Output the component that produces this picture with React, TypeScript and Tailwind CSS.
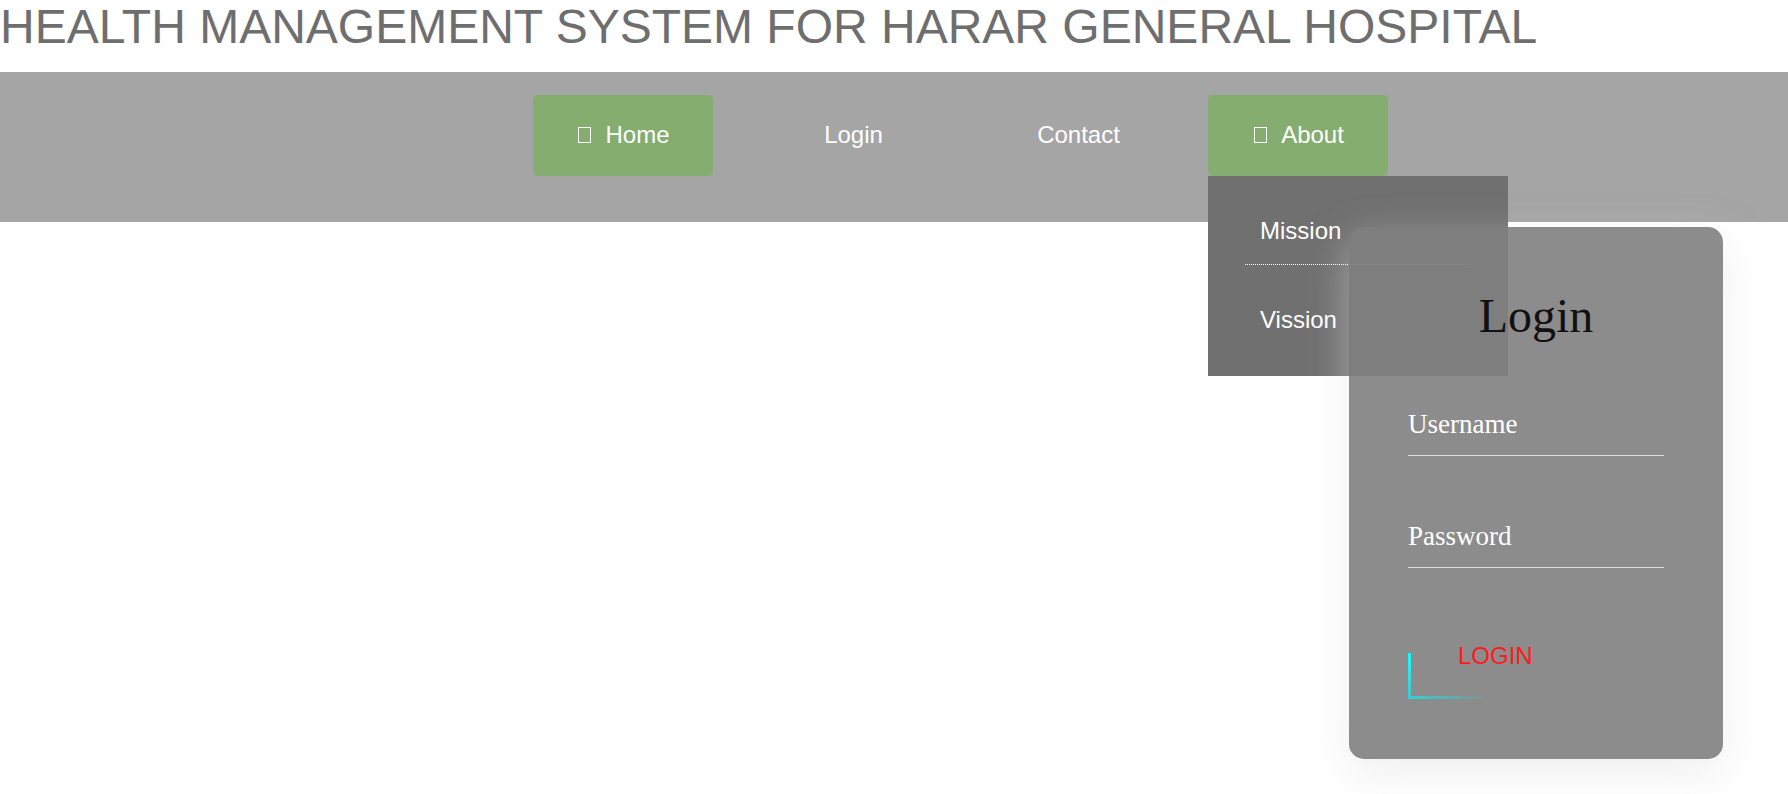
const sans = "font-['Liberation_Sans',Arial,sans-serif]";

function NavItem({ label, active, icon }: { label: string; active?: boolean; icon?: boolean }) {
  return (
    <a
      className={`flex h-[81px] w-[180px] items-center justify-center rounded-[5px] pb-[2px] text-[24px] leading-[28px] text-white ${
        active ? "bg-[#84ad6f] pl-[2px]" : "pl-[11px]"
      }`}
    >
      {/* the icon font is missing in the original, so it shows an empty box */}
      {icon && <span className="mr-[14px] h-[16px] w-[13px] border border-white" />}
      {label}
    </a>
  );
}

function Field({ label }: { label: string }) {
  return (
    <div className="h-[47px] border-b border-[#dddddd] text-[27px] leading-[30px] text-white">
      {label}
    </div>
  );
}

export default function App() {
  return (
    <div className={`relative min-h-screen bg-white ${sans}`}>
      <h1 className="h-[72px] text-[48px] leading-[53px] font-normal text-[#6e6e6e]">
        HEALTH MANAGEMENT SYSTEM FOR HARAR GENERAL HOSPITAL
      </h1>

      {/* Nav */}
      <nav className="relative h-[150px] bg-[#a5a5a5] pl-[533px] pt-[23px]">
        <div className="flex gap-[45px]">
          <NavItem label="Home" active icon />
          <NavItem label="Login" />
          <NavItem label="Contact" />
          <div className="relative">
            <NavItem label="About" active icon />
            <ul className="absolute left-0 top-[81px] h-[200px] w-[300px] bg-[#707070] text-[24px] leading-[28px] text-white">
              <li className="ml-[37px] w-[225px] border-b border-dotted border-white pb-[19px] pl-[15px] pt-[41px]">
                Mission
              </li>
              <li className="pl-[52px] pt-[41px]">Vission</li>
            </ul>
          </div>
        </div>
      </nav>

      {/* Login card */}
      <div className="absolute left-[1349px] top-[227px] h-[532px] w-[374px] rounded-[15px] bg-[rgba(128,128,128,0.9)] px-[59px] pt-[61px] shadow-[0_15px_40px_rgba(226,226,226,0.5)]">
        <h2 className="text-center font-['Liberation_Serif',serif] text-[48px] leading-[56px] font-normal text-[#111111]">
          Login
        </h2>
        <form className="mt-[65px] flex flex-col gap-[65px] font-['Liberation_Serif',serif]">
          <Field label="Username" />
          <Field label="Password" />
        </form>
        <div className="relative mt-[74px] h-[57px] pl-[50px] text-[24px] leading-[28px] text-[#ff1a1a]">
          LOGIN
          <span className="absolute bottom-0 left-0 h-[46px] w-[3px] bg-gradient-to-b from-[#00ffff] to-[#40c4cc]" />
          <span className="absolute bottom-0 left-0 h-[3px] w-[80px] bg-gradient-to-r from-[#30d0d8] to-transparent" />
        </div>
      </div>
    </div>
  );
}
